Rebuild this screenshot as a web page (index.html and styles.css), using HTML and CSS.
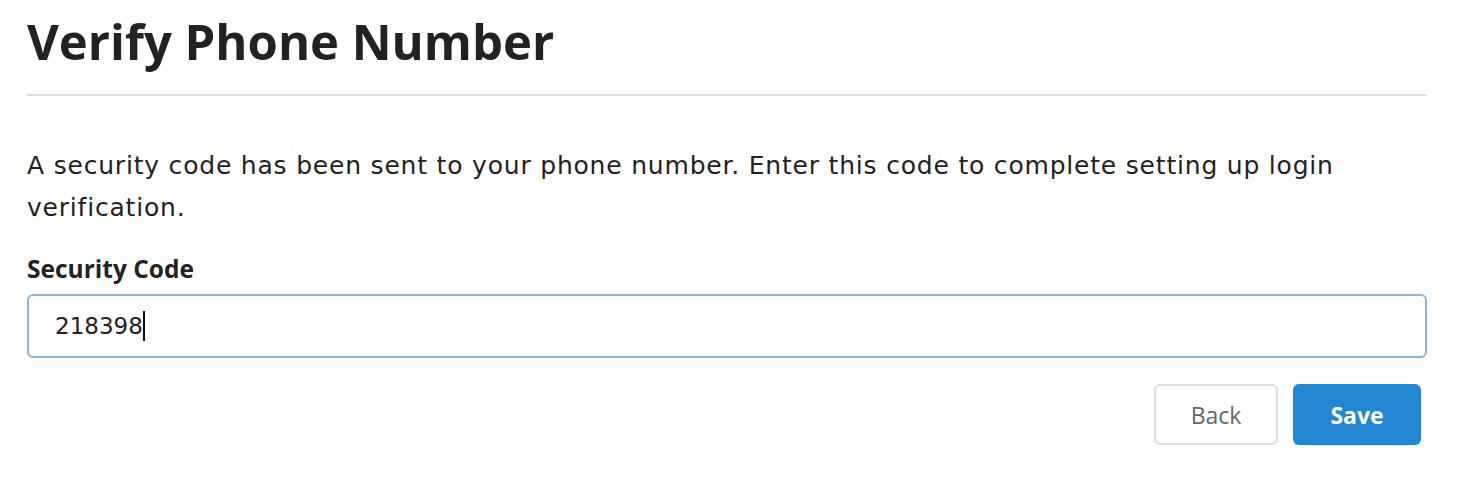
FILE: index.html
```html
<!DOCTYPE html>
<html lang="en">
<head>
  <meta charset="UTF-8">
  <meta name="viewport" content="width=device-width, initial-scale=1.0">
  <title>Verify Phone Number</title>
  <link rel="stylesheet" href="styles.css">
</head>
<body>
  <main class="panel">
    <h1 class="title">Verify Phone Number</h1>

    <p class="intro">A security code has been sent to your phone number. Enter this code to complete setting up login verification.</p>

    <section class="field">
      <label for="code">Security Code</label>
      <div class="code-input">
        <span class="code-value">218398</span><span class="caret"></span>
      </div>
    </section>

    <div class="actions">
      <button class="btn btn-back">Back</button>
      <button class="btn btn-save">Save</button>
    </div>
  </main>
</body>
</html>
```

FILE: styles.css
```css
* {
  box-sizing: border-box;
}

body {
  margin: 0;
  font-family: 'Open Sans', 'Liberation Sans', sans-serif;
  color: #222;
  background: #fff;
}

.panel {
  width: 1400px;
  margin-left: 27px;
  padding-top: 10px;
}

.title {
  margin: 0;
  padding-bottom: 22px;
  font-size: 49px;
  font-weight: 700;
  line-height: 62px;
  border-bottom: 2px solid #dddddd;
}

.intro {
  width: 1360px;
  margin: 49px 0 0;
  font-family: 'DejaVu Sans', sans-serif;
  font-size: 25px;
  letter-spacing: 0.8px;
  line-height: 42px;
}

.field {
  margin-top: 25px;
}

.field label {
  display: block;
  font-size: 24.5px;
  font-weight: 700;
  line-height: 30px;
}

.code-input {
  display: flex;
  align-items: center;
  height: 64px;
  margin-top: 10px;
  padding: 0 26px;
  border: 2px solid #86b6dc;
  border-radius: 6px;
  font-family: 'DejaVu Sans', sans-serif;
  font-size: 23px;
}

.caret {
  width: 2px;
  height: 30px;
  background: #111;
}

.actions {
  display: flex;
  justify-content: flex-end;
  gap: 15px;
  margin-top: 26px;
  padding-right: 6px;
}

.btn {
  height: 61px;
  border-radius: 6px;
  font-family: inherit;
  font-size: 23px;
}

.btn-back {
  width: 124px;
  background: #fff;
  border: 2px solid #dddddd;
  color: #666;
}

.btn-save {
  width: 128px;
  background: #2386d1;
  border: none;
  color: #fff;
  font-weight: 700;
}
```
